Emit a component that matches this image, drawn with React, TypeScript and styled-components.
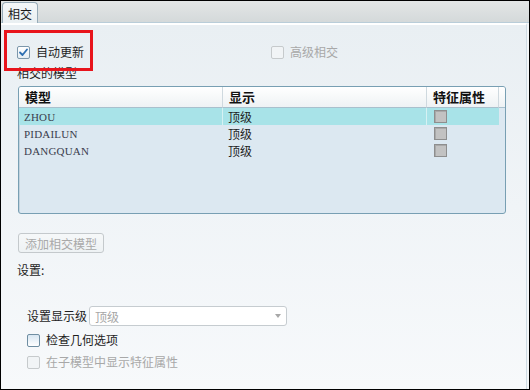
import React from "react";
import styled, { createGlobalStyle, css } from "styled-components";

const Global = createGlobalStyle`
  html, body { margin: 0; padding: 0; background: #fff; }
  body { font-family: "Noto Sans CJK SC", "Noto Sans", sans-serif; font-size: 12px; color: #1e1e1e; }
  * { box-sizing: border-box; }
`;

const Frame = styled.div`
  position: relative;
  width: 530px;
  height: 390px;
  border: 1px solid #000;
  display: flex;
  flex-direction: column;
  background: #f3f6f8;
  overflow: hidden;
`;

const TabStrip = styled.div`
  height: 22px;
  flex: none;
  display: flex;
  align-items: flex-end;
  padding-left: 1px;
  background: linear-gradient(#e3e6e6, #d4d9da);
  border-bottom: 1px solid #b9cdd9;
`;

const Tab = styled.div`
  height: 21px;
  width: 36px;
  margin-bottom: -1px;
  border: 1px solid #97abb8;
  border-bottom: none;
  border-radius: 4px 4px 0 0;
  background: linear-gradient(#f4f7f8, #e9eff2);
  display: flex;
  align-items: center;
  justify-content: center;
  font-size: 12px;
  line-height: 14px;
  color: #1a1a1a;
  padding-top: 1px;
`;

const Panel = styled.div`
  flex: 1;
  border-top: 2px solid #ffffff;
  border-right: 1px solid #cfdbe3;
  margin-right: 2px;
  background: linear-gradient(#e9eff3, #f7f9fb);
  padding: 19px 0 0 16px;
  display: flex;
  flex-direction: column;
  align-items: flex-start;
`;

const TopRow = styled.div`
  display: grid;
  grid-template-columns: 254px auto;
  height: 16px;
  align-items: center;
`;

const CheckRow = styled.label<{ $mt?: number; $ml?: number }>`
  display: flex;
  align-items: center;
  gap: 6px;
  height: 16px;
  margin-top: ${(p) => p.$mt ?? 0}px;
  margin-left: ${(p) => p.$ml ?? 0}px;
`;

const Box = styled.span<{ $variant: "checked" | "disabled" | "normal" }>`
  width: 13px;
  height: 13px;
  border-radius: 2px;
  flex: none;
  display: inline-flex;
  align-items: center;
  justify-content: center;
  ${(p) =>
    p.$variant === "checked"
      ? css`
          border: 1px solid #7c97ab;
          background: linear-gradient(#ffffff, #e4edf3);
        `
      : p.$variant === "normal"
      ? css`
          border: 1px solid #6f8ea2;
          background: linear-gradient(#d7e6f2, #ffffff);
        `
      : css`
          border: 1px solid #c6cacc;
          background: #f1f4f6;
        `}
`;

const Text = styled.span<{ $disabled?: boolean }>`
  font-size: 12px;
  line-height: 16px;
  color: ${(p) => (p.$disabled ? "#a8a8a8" : "#1e1e1e")};
  white-space: nowrap;
`;

const SectionLabel = styled.div<{ $mt: number }>`
  font-size: 12px;
  line-height: 16px;
  color: #1e1e1e;
  margin-top: ${(p) => p.$mt}px;
`;

const Table = styled.div`
  margin-top: 5px;
  margin-left: 1px;
  width: 488px;
  height: 128px;
  border: 1px solid #789fb3;
  border-radius: 3px;
  background: #dce8f1;
  box-shadow: inset 1px 1px 0 #c3d3de;
  overflow: hidden;
`;

const Grid = styled.div`
  display: grid;
  grid-template-columns: 204px 204px 72px 1fr;
`;

const HeadCell = styled.div<{ $last?: boolean }>`
  height: 21px;
  background: linear-gradient(#ffffff, #eef2f4);
  border-bottom: 1px solid #a9c0cd;
  border-right: ${(p) => (p.$last ? "none" : "1px solid #cfd9df")};
  font-weight: bold;
  font-size: 13px;
  line-height: 20px;
  padding-left: 6px;
  color: #111;
`;

const Cell = styled.div<{ $sel?: boolean; $divider?: boolean }>`
  height: 17px;
  display: flex;
  align-items: center;
  padding-left: 5px;
  background: ${(p) => (p.$sel ? "#a8e3e8" : "transparent")};
  border-right: ${(p) => (p.$divider ? "1px solid #d6f1f3" : "none")};
`;

const NameText = styled.span`
  font-family: "Liberation Serif", "DejaVu Serif", serif;
  font-size: 11px;
  color: #3a3d4d;
  letter-spacing: 0.2px;
`;

const ShowText = styled.span`
  font-size: 12px;
  color: #1e1e1e;
`;

const FeatBox = styled.span`
  width: 13px;
  height: 13px;
  margin-left: 2px;
  background: #c2c2c2;
  border: 1px solid #8e8e8e;
  box-shadow: inset 1px 1px 0 #a9a9a9;
`;

const Button = styled.button`
  margin-top: 19px;
  margin-left: 1px;
  height: 20px;
  width: 86px;
  padding: 0;
  border: 1px solid #c4c9cc;
  border-radius: 3px;
  background: linear-gradient(#f6f8f9, #eef2f4);
  font-family: "Noto Sans CJK SC", sans-serif;
  font-size: 12px;
  color: #a9a9a9;
`;

const ComboRow = styled.div`
  margin-top: 28px;
  margin-left: 10px;
  display: flex;
  align-items: center;
  gap: 2px;
  height: 20px;
`;

const Combo = styled.div`
  width: 198px;
  height: 20px;
  border: 1px solid #c6ccd0;
  border-radius: 3px;
  background: #fff;
  display: flex;
  align-items: center;
  justify-content: space-between;
  padding: 0 5px 0 5px;
  color: #a6a6a6;
  font-size: 12px;
`;

const Arrow = styled.span`
  width: 0;
  height: 0;
  border-left: 3.5px solid transparent;
  border-right: 3.5px solid transparent;
  border-top: 4px solid #a8a8a8;
`;

const RedBox = styled.div`
  position: absolute;
  left: 3px;
  top: 29px;
  width: 89px;
  height: 41px;
  border: 3px solid #e8141c;
  pointer-events: none;
`;

const CheckMark = () => (
  <svg width="11" height="11" viewBox="0 0 11 11">
    <path d="M2 5.5 L4.5 8 L9 2.5" fill="none" stroke="#2d6fb2" strokeWidth="1.8" strokeLinecap="round" strokeLinejoin="round" />
  </svg>
);

const rows = [
  { name: "ZHOU", sel: true },
  { name: "PIDAILUN", sel: false },
  { name: "DANGQUAN", sel: false },
];

export default function App() {
  return (
    <>
      <Global />
      <Frame>
        <TabStrip>
          <Tab>相交</Tab>
        </TabStrip>
        <Panel>
          <TopRow>
            <CheckRow>
              <Box $variant="checked">
                <CheckMark />
              </Box>
              <Text>自动更新</Text>
            </CheckRow>
            <CheckRow>
              <Box $variant="disabled" />
              <Text $disabled>高级相交</Text>
            </CheckRow>
          </TopRow>
          <SectionLabel $mt={5}>相交的模型</SectionLabel>
          <Table>
            <Grid>
              <HeadCell>模型</HeadCell>
              <HeadCell>显示</HeadCell>
              <HeadCell>特征属性</HeadCell>
              <HeadCell $last />
              {rows.map((r) => (
                <React.Fragment key={r.name}>
                  <Cell $sel={r.sel} $divider={r.sel}>
                    <NameText>{r.name}</NameText>
                  </Cell>
                  <Cell $sel={r.sel} $divider={r.sel}>
                    <ShowText>顶级</ShowText>
                  </Cell>
                  <Cell $sel={r.sel}>
                    <FeatBox />
                  </Cell>
                  <Cell />
                </React.Fragment>
              ))}
            </Grid>
          </Table>
          <Button disabled>添加相交模型</Button>
          <SectionLabel $mt={9}>设置:</SectionLabel>
          <ComboRow>
            <Text>设置显示级</Text>
            <Combo>
              <span>顶级</span>
              <Arrow />
            </Combo>
          </ComboRow>
          <CheckRow $mt={6} $ml={10}>
            <Box $variant="normal" />
            <Text>检查几何选项</Text>
          </CheckRow>
          <CheckRow $mt={6} $ml={10}>
            <Box $variant="disabled" />
            <Text $disabled>在子模型中显示特征属性</Text>
          </CheckRow>
        </Panel>
        <RedBox />
      </Frame>
    </>
  );
}
